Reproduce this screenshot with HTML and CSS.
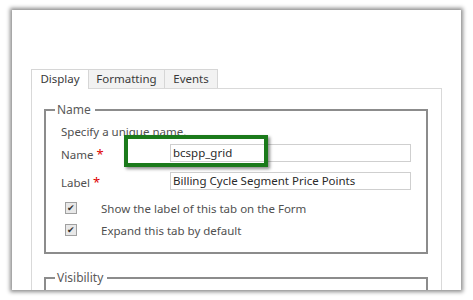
FILE: index.html
```html
<!DOCTYPE html>
<html lang="en">
<head>
  <meta charset="UTF-8" />
  <title>Tab Properties</title>
  <link rel="stylesheet" href="styles.css">
</head>
<body>
  <div class="window">
    <div class="tabs">
      <div class="tab active">Display</div>
      <div class="tab">Formatting</div>
      <div class="tab">Events</div>
    </div>

    <div class="panel">
      <fieldset class="group">
        <legend>Name</legend>
        <div class="hint">Specify a unique name.</div>

        <div class="field-row">
          <label>Name <span class="req">*</span></label>
          <div class="input">bcspp_grid</div>
          <div class="highlight"></div>
        </div>
        <div class="field-row">
          <label>Label <span class="req">*</span></label>
          <div class="input">Billing Cycle Segment Price Points</div>
        </div>

        <div class="check-row">
          <span class="checkbox">&#10004;</span>
          <span>Show the label of this tab on the Form</span>
        </div>
        <div class="check-row">
          <span class="checkbox">&#10004;</span>
          <span>Expand this tab by default</span>
        </div>
      </fieldset>

      <fieldset class="group empty">
        <legend>Visibility</legend>
      </fieldset>
    </div>
  </div>
</body>
</html>
```

FILE: styles.css
```css
body {
  margin: 0;
  background: #ffffff;
  font-family: 'Noto Sans', 'Open Sans', sans-serif;
  font-size: 11.5px;
  color: #505050;
}
.window {
  margin: 10px 12px;
  width: 449px;
  height: 280px;
  background: #ffffff;
  box-shadow: 0 0 4px 2px rgba(0, 0, 0, 0.45);
  overflow: hidden;
  padding: 59px 0 0 19px;
  box-sizing: border-box;
}
.tabs {
  display: flex;
  height: 19px;
}
.tab {
  height: 19px;
  box-sizing: border-box;
  border: 1px solid #d6d6d6;
  border-bottom: none;
  background: #f2f2f2;
  line-height: 18px;
  text-align: center;
  color: #3a3a3a;
  margin-left: -1px;
}
.tab:first-child {
  margin-left: 0;
  width: 58px;
}
.tab:nth-child(2) {
  width: 77px;
}
.tab:nth-child(3) {
  width: 54px;
}
.tab.active {
  background: #ffffff;
  height: 20px;
  position: relative;
  z-index: 1;
}
.panel {
  width: 411px;
  box-sizing: border-box;
  border: 1px solid #d9d9d9;
  padding: 12px 13px 0 12px;
  height: 260px;
}
.group {
  margin: 0 0 15px 0;
  padding: 0 14px 11px 15px;
  border: 2px solid #8c8c8c;
}
.group.empty {
  height: 40px;
}
.group legend {
  padding: 0 4px 0 2px;
  margin-left: -6px;
  color: #5a5a5a;
  font-size: 12px;
}
.hint {
  margin-top: 6px;
  height: 18px;
  line-height: 16px;
}
.field-row {
  display: flex;
  align-items: center;
  position: relative;
  margin-bottom: 7px;
}
.field-row + .field-row {
  margin-bottom: 6px;
}
.field-row label {
  width: 109px;
  padding-top: 3px;
}
.req {
  color: #e00000;
  font-size: 13px;
}
.input {
  width: 241px;
  height: 18px;
  box-sizing: border-box;
  border: 1px solid #cfcfcf;
  padding: 0 2px;
  line-height: 16px;
  color: #2a2a2a;
}
.highlight {
  position: absolute;
  left: 63px;
  top: -7px;
  width: 144px;
  height: 32px;
  box-sizing: border-box;
  border: 4px solid #1b7a1b;
  box-shadow: 2px 2px 3px rgba(0, 0, 0, 0.45);
}
.check-row {
  display: flex;
  align-items: center;
  height: 22px;
  padding-left: 4px;
}
.checkbox {
  width: 10px;
  height: 10px;
  border: 1px solid #a0a0a0;
  background: #e8e8e8;
  font-size: 9px;
  line-height: 10px;
  text-align: center;
  color: #333333;
  margin-right: 24px;
}
```
